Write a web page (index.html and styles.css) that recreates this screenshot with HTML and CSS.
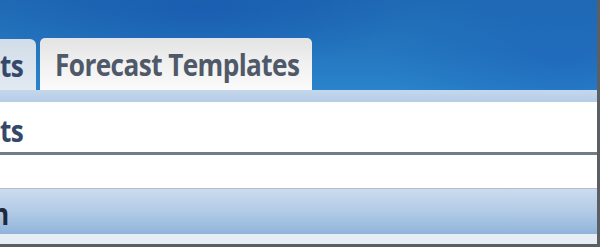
FILE: index.html
```html
<!DOCTYPE html>
<html>
<head>
<meta charset="utf-8">
<link rel="stylesheet" href="styles.css">
</head>
<body>
<div class="frame">
  <div class="header">
    <div class="tabs">
      <div class="tab tab-prev"><span class="label">ts</span></div>
      <div class="tab tab-active"><span class="label">Forecast Templates</span></div>
    </div>
  </div>
  <div class="subbar"></div>
  <div class="panel">
    <span class="label panel-title">ts</span>
  </div>
  <div class="spacer"></div>
  <div class="section">
    <span class="label section-title">n</span>
  </div>
  <div class="footer-row"></div>
</div>
</body>
</html>
```

FILE: styles.css
```css
* { box-sizing: border-box; }
html, body { margin: 0; padding: 0; background: #ffffff; }
body { font-family: "Open Sans", "DejaVu Sans", sans-serif; }

.frame {
  width: 600px;
  height: 247px;
  border-right: 3px solid #5b5f63;
  border-bottom: 3px solid #5b5f63;
  overflow: hidden;
  display: flex;
  flex-direction: column;
}

.header {
  height: 90px;
  flex: none;
  background:
    radial-gradient(ellipse 220px 60px at 200px 10px, rgba(20, 80, 170, 0.5), rgba(20, 80, 170, 0) 100%),
    radial-gradient(ellipse 180px 80px at 560px 60px, rgba(25, 90, 180, 0.45), rgba(25, 90, 180, 0) 100%),
    linear-gradient(to bottom, #1f6ab5 0%, #2476bf 55%, #2a84cb 100%);
  display: flex;
  align-items: flex-end;
}

.tabs {
  display: flex;
  align-items: flex-end;
  gap: 4px;
  height: 52px;
}

.label {
  display: inline-block;
  font-weight: 700;
  font-size: 31px;
  line-height: 1;
  letter-spacing: -0.7px;
  transform: scaleX(0.845);
  transform-origin: left center;
  white-space: nowrap;
}

.tab {
  height: 51px;
  display: flex;
  align-items: center;
}

.tab-prev {
  width: 36px;
  background: linear-gradient(to bottom, #d2dde9 0%, #e2e9f1 100%);
  color: #34496a;
  padding-top: 2px;
  border-radius: 0 6px 0 0;
}

.tab-active {
  width: 272px;
  height: 52px;
  background: linear-gradient(to bottom, #e3e3e3 0%, #f1f1f1 50%, #fbfbfb 100%);
  color: #4f5968;
  padding-left: 15px;
  padding-top: 1px;
  border-radius: 5px 5px 0 0;
}

.subbar {
  height: 12px;
  flex: none;
  background: linear-gradient(to bottom, #c4d7ec 0%, #b6cde7 100%);
}

.panel {
  height: 53px;
  flex: none;
  background: #ffffff;
  border-bottom: 3px solid #727d88;
  display: flex;
  align-items: center;
}

.panel-title {
  color: #34486a;
  padding-top: 7px;
}

.spacer {
  height: 34px;
  flex: none;
  background: #ffffff;
  border-bottom: 1px solid #b3bfcb;
}

.section {
  height: 45px;
  flex: none;
  background: linear-gradient(to bottom, #cbdcee 0%, #b2cbe6 50%, #90b4da 100%);
  display: flex;
  align-items: center;
}

.section-title {
  color: #1e2a3c;
  margin-left: -8px;
  padding-top: 4px;
}

.footer-row {
  flex: 1;
  background: #e7edf5;
}
```
